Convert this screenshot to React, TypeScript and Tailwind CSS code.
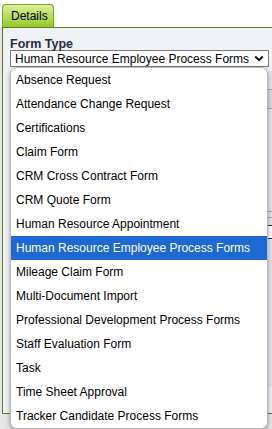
import React from "react";

const options = [
  "Absence Request",
  "Attendance Change Request",
  "Certifications",
  "Claim Form",
  "CRM Cross Contract Form",
  "CRM Quote Form",
  "Human Resource Appointment",
  "Human Resource Employee Process Forms",
  "Mileage Claim Form",
  "Multi-Document Import",
  "Professional Development Process Forms",
  "Staff Evaluation Form",
  "Task",
  "Time Sheet Approval",
  "Tracker Candidate Process Forms",
];

const selected = "Human Resource Employee Process Forms";

function Chevron() {
  return (
    <svg width="10" height="7" viewBox="0 0 10 7" className="shrink-0">
      <path d="M1.2 1.5 L5 5.2 L8.8 1.5" fill="none" stroke="#111" strokeWidth="2" />
    </svg>
  );
}

export default function App() {
  return (
    <div className="relative w-[272px] h-[429px] overflow-hidden bg-[#e6e6e6] font-['Liberation_Sans',Arial,sans-serif] text-[12px] text-black">
      {/* tab strip */}
      <div className="h-[27px] bg-white flex items-end pl-[2px]">
        <div className="h-[23px] w-[52px] rounded-t-[4px] border border-b-0 border-[#7aa61c] bg-gradient-to-b from-[#dcf296] to-[#97c91c] flex items-center pl-[8px] leading-none">
          Details
        </div>
      </div>

      {/* panel */}
      <div className="ml-[2px] h-[387px] border-t border-l border-b border-[#5e7d22] bg-[#eef2f7] pt-[10px] pl-[7px]">
        <div className="font-bold text-[12.5px] leading-[12px] text-[#2b2b3b]">Form Type</div>
        <div className="mt-[0px] w-[259px] h-[17px] bg-white border border-[#7a7a7a] flex items-center justify-between pl-[4px] pr-[4px]">
          <span className="leading-none">{selected}</span>
          <Chevron />
        </div>

        {/* content underneath the open list */}
        <div className="mt-[4px] w-[270px] h-[316px] bg-[#e1e5ea] flex flex-col">
          <div className="h-[18px]" />
          <div className="h-[20px] border-t border-b border-[#a4abb2] bg-[#d6dbe0]" />
          <div className="h-[102px]" />
          <div className="h-[7px] border-t border-b border-[#a4abb2]" />
          <div className="h-[7px]" />
          <div className="h-[14px] border border-[#333] bg-white" />
          <div className="flex-1" />
        </div>
      </div>

      {/* open option list */}
      <div className="absolute left-[10px] top-[67px] w-[258px] rounded-[7px] border border-[#b9b9b9] bg-white shadow-[0_2px_5px_rgba(0,0,0,0.35)] flex flex-col overflow-hidden">
        {options.map((o) => (
          <div
            key={o}
            className={`h-[24px] flex items-center pl-[5px] ${
              o === selected ? "bg-[#1e68d4] text-white" : "text-black"
            }`}
          >
            {o}
          </div>
        ))}
      </div>
    </div>
  );
}
